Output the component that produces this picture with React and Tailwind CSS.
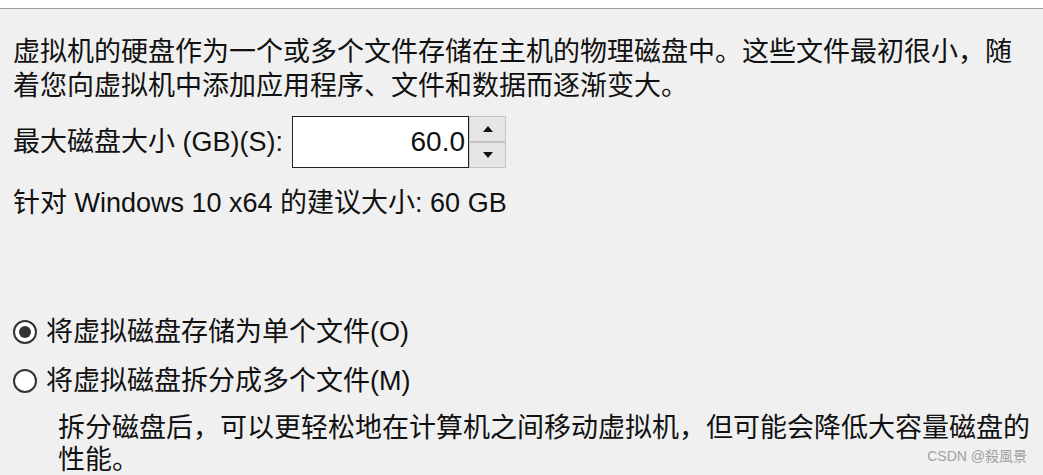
import React from 'react';

const cjk = { fontFamily: '"Liberation Sans", "Noto Sans CJK SC", sans-serif' };

const Radio = ({ checked, label }) => (
    <div className="flex items-center h-[34px]">
        <span className="w-[24px] h-[24px] rounded-full border-2 border-[#333] bg-white flex items-center justify-center ml-[13px]">
            {checked && <span className="w-[12px] h-[12px] rounded-full bg-[#333]" />}
        </span>
        <span className="ml-[9px] text-[27px] leading-[34px] text-[#111]">{label}</span>
    </div>
);

const App = () => {
    return (
        <div className="relative w-[1043px] h-[475px] overflow-hidden bg-[#f0f0f0] text-[#111]" style={cjk}>
            <div className="h-[8px] bg-white" />
            <div className="h-[1px] bg-[#a0a0a0]" />

            <p className="mt-[26px] ml-[13px] w-[1010px] text-[27px] leading-[34px]">
                虚拟机的硬盘作为一个或多个文件存储在主机的物理磁盘中。这些文件最初很小，随着您向虚拟机中添加应用程序、文件和数据而逐渐变大。
            </p>

            <div className="mt-[13px] flex items-center h-[52px]">
                <span className="ml-[13px] w-[279px] text-[27px]">最大磁盘大小 (GB)(S):</span>
                <div className="w-[177px] h-[52px] bg-white border border-[#222] flex items-center justify-end pr-[3px] text-[28px]">
                    60.0
                </div>
                <div className="flex flex-col w-[37px] h-[52px]">
                    <button className="h-[26px] bg-[#e6e6e6] border border-[#c4c4c4] flex items-center justify-center">
                        <svg width="10" height="6" viewBox="0 0 10 6"><path d="M5 0 L10 6 L0 6 Z" fill="#111" /></svg>
                    </button>
                    <button className="h-[26px] bg-[#e6e6e6] border border-[#c4c4c4] flex items-center justify-center">
                        <svg width="10" height="6" viewBox="0 0 10 6"><path d="M0 0 L10 0 L5 6 Z" fill="#111" /></svg>
                    </button>
                </div>
            </div>

            <p className="mt-[18px] ml-[13px] text-[27px] leading-[34px]">针对 Windows 10 x64 的建议大小: 60 GB</p>

            <div className="mt-[95px]">
                <Radio checked label="将虚拟磁盘存储为单个文件(O)" />
            </div>
            <div className="mt-[15px]">
                <Radio label="将虚拟磁盘拆分成多个文件(M)" />
            </div>

            <p className="mt-[14px] ml-[58px] w-[980px] text-[27px] leading-[32px]">
                拆分磁盘后，可以更轻松地在计算机之间移动虚拟机，但可能会降低大容量磁盘的性能。
            </p>

            <span className="absolute right-[16px] bottom-[8px] text-[14px] text-[#a0a0a0]">CSDN @殺風景</span>
        </div>
    );
};

export default App;
